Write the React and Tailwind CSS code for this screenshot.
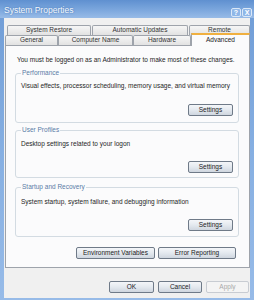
import React from 'react'

const font = { fontFamily: '"Liberation Sans", Arial, sans-serif' }

function TabBtn({ label, className = '' }) {
  return (
    <div className={`h-[10px] flex items-center justify-center border border-b-0 border-[#9ea3ab] rounded-t-[2px] bg-gradient-to-b from-[#f6f6f6] to-[#e2e2e2] text-[6.5px] leading-none text-[#333] ${className}`}>
      {label}
    </div>
  )
}

function Btn({ label, className = '', disabled = false }) {
  return (
    <div className={`h-[12px] flex items-center justify-center rounded-[2px] border text-[6.5px] leading-none ${disabled ? 'border-[#c8ccd2] bg-[#f4f4f4] text-[#a8a8a8]' : 'border-[#6f7a88] bg-gradient-to-b from-[#f4f6f9] via-[#e4e9ef] to-[#cfd6df] text-[#222]'} ${className}`}>
      {label}
    </div>
  )
}

function Group({ title, text, h, mt, pt, bmt }) {
  return (
    <div className={`relative ml-[9px] w-[224px] rounded-[3px] border border-[#d3dbe2] flex flex-col ${h} ${mt}`}>
      <span className="absolute left-[5px] top-[-5px] px-[1px] bg-[#fbfbfc] text-[6.5px] leading-[8px] text-[#5a7ba6]">{title}</span>
      <div className={`pl-[5px] text-[6.5px] leading-[8px] text-[#262626] ${pt}`}>{text}</div>
      <Btn label="Settings" className={`self-end mr-[5px] w-[45px] ${bmt}`} />
    </div>
  )
}

export default function App() {
  return (
    <div style={font} className="w-[254px] h-[300px] overflow-hidden flex flex-col bg-gradient-to-b from-[#6f9cd6] via-[#86afe2] to-[#97bbe8]">
      {/* title bar */}
      <div className="h-[18px] shrink-0 flex items-center pl-[4px] pr-[2px] bg-gradient-to-b from-[#5f90d0] via-[#79a5dc] to-[#98bbe7]">
        <span className="text-[8.5px] leading-none text-[#f4f8fd] [text-shadow:0_0_2px_#3d6fb0] pt-[3px]">System Properties</span>
        <div className="ml-auto flex gap-[1px] pt-[6px]">
          <div className="w-[10px] h-[9px] rounded-[2px] border border-[#dbe8f7] bg-[#8fb7e8] flex items-center justify-center text-[7px] font-bold leading-none text-white">?</div>
          <div className="w-[10px] h-[9px] rounded-[2px] border border-[#dbe8f7] bg-[#8fb7e8] flex items-center justify-center text-[7px] font-bold leading-none text-white">X</div>
        </div>
      </div>

      {/* body */}
      <div className="flex-1 mx-[4px] mb-[2px] bg-[#f0f0f0] flex flex-col pl-[1px]">
        {/* tabs */}
        <div className="flex pt-[7px] pl-[2px]">
          <TabBtn label="System Restore" className="w-[84px]" />
          <TabBtn label="Automatic Updates" className="ml-[1px] w-[96px]" />
          <TabBtn label="Remote" className="ml-[1px] w-[61px]" />
        </div>
        <div className="flex h-[10px] relative z-10">
          <TabBtn label="General" className="w-[53px]" />
          <TabBtn label="Computer Name" className="w-[75px]" />
          <TabBtn label="Hardware" className="w-[58px]" />
          <div className="w-[59px] h-[13px] -mt-[2px] flex items-center justify-center border-x border-[#9ea3ab] border-t-2 border-t-[#f0b040] bg-[#fbfbfc] text-[6.5px] leading-none text-[#222]">Advanced</div>
        </div>

        {/* panel */}
        <div className="w-[245px] h-[223px] border border-[#9ea3ab] bg-[#fbfbfc] flex flex-col">
          <div className="pl-[11px] pt-[10px] text-[6.5px] leading-[8px] text-[#262626]">
            You must be logged on as an Administrator to make most of these changes.
          </div>
          <Group title="Performance" text="Visual effects, processor scheduling, memory usage, and virtual memory" h="h-[50px]" mt="mt-[9px]" pt="pt-[8px]" bmt="mt-[14px]" />
          <Group title="User Profiles" text="Desktop settings related to your logon" h="h-[48px]" mt="mt-[7px]" pt="pt-[9px]" bmt="mt-[13px]" />
          <Group title="Startup and Recovery" text="System startup, system failure, and debugging information" h="h-[50px]" mt="mt-[9px]" pt="pt-[10px]" bmt="mt-[13px]" />
          <div className="flex justify-end gap-[3px] mr-[13px] mt-[10px]">
            <Btn label="Environment Variables" className="w-[79px] h-[12px]" />
            <Btn label="Error Reporting" className="w-[78px] h-[12px]" />
          </div>
        </div>

        {/* dialog buttons */}
        <div className="flex justify-end gap-[4px] pr-[1px] mt-[13px]">
          <Btn label="OK" className="w-[45px]" />
          <Btn label="Cancel" className="w-[44px]" />
          <Btn label="Apply" className="w-[43px]" disabled />
        </div>
      </div>
    </div>
  )
}
